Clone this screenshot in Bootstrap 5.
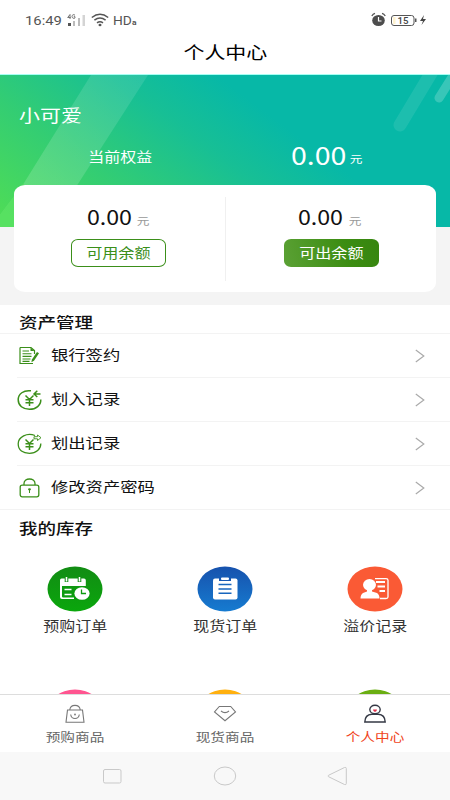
<!DOCTYPE html>
<html lang="zh-CN">
<head>
<meta charset="utf-8">
<meta name="viewport" content="width=device-width, initial-scale=1">
<title>个人中心</title>
<link href="https://cdn.jsdelivr.net/npm/bootstrap@5.3.0/dist/css/bootstrap.min.css" rel="stylesheet">
<style>
body{font-family:"Noto Sans CJK SC",sans-serif;line-height:1;color:#111;background:#fff}
svg{display:block;flex:none}
.screen{width:450px;height:800px}
/* wide lettering */
.sx{display:inline-block;transform:scaleX(1.22);white-space:nowrap}
.sl{transform-origin:left center}
.status{height:38px;padding:2px 23px 0 25px;color:#555;font-family:Roboto,sans-serif}
.clock{font-size:13px;width:36px;margin-right:6px}
.clock .sx{transform:scaleX(1.14)}
.hd{font-size:13px;margin-left:4px}
.hd .sx{transform:scaleX(1.06)}
.hd b{font-size:8px}
.title{height:37px;font-size:17.2px;padding-bottom:9px;color:#000;border-bottom:1px solid #a5fff3}
.balance{height:230px;background:#f4f4f4}
.hero-art{position:absolute;left:0;top:0}
.user{padding:31px 0 0 19px;height:70px;font-size:17.2px;color:#fff}
.equity{height:40px;padding-bottom:20px;color:#fff}
.equity .cap{font-size:13.1px;margin-left:15px}
.equity .amount{padding-right:19px}
.big{font-size:24.4px;transform:scaleX(1.17)}
.mid{font-size:20px;transform:scaleX(1.16)}
.yuan{font-size:10.4px}
.amount .yuan{margin:0 0 3px 9px}
.half .yuan{color:#999;margin:0 0 1px 10px}
.wallet{margin:0 14px;height:107px;border-radius:11px/9px}
.half{height:107px;padding-top:22px}
.divide{width:1px;height:84px;background:#f0f0f0}
.pill{width:95px;height:28px;border-radius:7px/6px;font-size:13.2px;border:1px solid #3b8f1a;color:#3b8f1a;margin:auto 1px 25px 0;padding-bottom:1px}
.pill.solid{border:0;color:#fff;background:linear-gradient(75deg,#5ba135,#3c8d12 65%,#36850f);margin:auto 0 25px 1px}
.sec{font-size:15.2px;font-weight:500;color:#111;padding-left:19px}
.sec-top{height:29px;border-bottom:1px solid #f3f3f3;padding-top:5px}
.entry{height:44px;margin-left:17px;border-bottom:1px solid #f3f3f3;font-size:14.2px;padding:0 25px 0 0}
.entry .sx{margin-top:-2px}
.entry svg.ic{margin-right:9px}
.last-entry{margin-left:0;padding-left:17px}
.stock{height:184px}
.tile{font-size:13.1px;color:#333;height:123px}
.tile .sx{margin-top:7px}
.grid-area{height:145px;padding-top:17px}
.tabs{height:58px;border-top:1px solid #ddd;font-size:12px;color:#666}
.tabs .sx{margin-top:6px}
.tabs .active{color:#f0441c}
.keys{height:48px;background:#f8f8f8}
</style>
<script src="https://cdn.jsdelivr.net/npm/bootstrap@5.3.0/dist/js/bootstrap.bundle.min.js"></script>
</head>
<body>
<div class="screen d-flex flex-column overflow-hidden mx-auto">
  <header class="status d-flex align-items-center">
    <span class="clock"><span class="sx sl">16:49</span></span>
    <svg width="20" height="14" viewBox="0 0 20 14"><g fill="#bbb"><path d="M6 8h2v5H6zM11 5h2v8h-2z"/><path fill="#d4d4d4" d="M15.500 2h2.500v11h-2.500z"/></g><path fill="#555" d="M1 10h3v3H1z"/><path fill="none" stroke="#666" stroke-width=".9" d="M3 6V1.500L.7 4.500h3M8 2.200C6.500.9 5 2 5 3.500s2 2.600 3 1.400V3.700H6.800"/></svg>
    <svg class="ms-1" width="18" height="14" viewBox="0 0 18 14"><g fill="none" stroke="#555" stroke-width="1.500"><path d="M.8 4.500Q9-1.800 17.200 4.500M3.400 7.200q5.600-4.300 11.200 0M6 9.900q3-2.200 6 0"/></g><ellipse cx="9" cy="12" rx="1.500" ry="1.200" fill="#555"/></svg>
    <span class="hd"><span class="sx sl">HD<b>a</b></span></span>
    <svg class="ms-auto" width="56" height="16" viewBox="0 0 56 16"><ellipse cx="7.500" cy="8.500" rx="6.300" ry="5.500" fill="#4d4d4d"/><path d="M.8 4Q2 2 4 1.400M11 1.400Q13 2 14.300 4" fill="none" stroke="#555" stroke-width="1.300"/><path d="M7.500 5v4h3" fill="none" stroke="#fff" stroke-width="1.200"/><rect x="20.500" y="3.500" width="22.500" height="10" rx="2.500" fill="#fff" stroke="#555"/><path d="M22 5h2.500v7H22z" fill="#fff3cf"/><path d="M44 6.500h1.500v3.500H44z" fill="#555"/><text x="26.500" y="11.600" font-family="Roboto,sans-serif" font-size="8.500" font-weight="500" textLength="11" lengthAdjust="spacingAndGlyphs" fill="#444">15</text><path d="m53 3-4 6h3l-1.500 4 4.500-6h-3z" fill="#444"/></svg>
  </header>
  <div class="title d-flex align-items-center justify-content-center"><span class="sx">个人中心</span></div>

  <section class="balance position-relative">
    <svg class="hero-art" width="450" height="152" viewBox="0 0 450 152">
      <defs><linearGradient id="sky" gradientUnits="userSpaceOnUse" x1="0" y1="150" x2="150" y2="-50"><stop offset="0" stop-color="#50dd55"/><stop offset=".4" stop-color="#33cd73"/><stop offset=".75" stop-color="#17bf95"/><stop offset="1" stop-color="#07b8a7"/></linearGradient>
      <linearGradient id="glow" x1="0" y1="1" x2="1" y2="0"><stop offset="0" stop-color="#fff" stop-opacity=".18"/><stop offset="1" stop-color="#fff" stop-opacity=".1"/></linearGradient></defs>
      <path fill="url(#sky)" d="M0 0h450v152H0z"/>
      <path fill="url(#glow)" d="M91 0h57L76 112 50 152H0v-12l24-32z"/>
      <path fill="#50e05b" fill-opacity=".75" d="M0 140 24 108v44H0z"/>
      <g stroke="#fff" stroke-linecap="round"><path stroke-opacity=".09" stroke-width="13" d="M400 50 433-5"/><path stroke-opacity=".2" stroke-width="9" d="m439 23 20-32"/></g>
    </svg>
    <div class="position-relative">
      <div class="user"><span class="sx sl">小可爱</span></div>
      <div class="equity d-flex align-items-center">
        <div class="col-6 text-center"><span class="sx cap">当前权益</span></div>
        <div class="amount col-6 d-flex align-items-end justify-content-center"><span class="sx big">0.00</span><span class="sx yuan">元</span></div>
      </div>
      <div class="wallet bg-white d-flex align-items-center">
        <div class="half flex-fill d-flex flex-column align-items-center">
          <div class="d-flex align-items-end"><span class="sx mid">0.00</span><span class="sx yuan">元</span></div>
          <div class="pill d-flex align-items-center justify-content-center"><span class="sx">可用余额</span></div>
        </div>
        <div class="divide"></div>
        <div class="half flex-fill d-flex flex-column align-items-center">
          <div class="d-flex align-items-end"><span class="sx mid">0.00</span><span class="sx yuan">元</span></div>
          <div class="pill solid d-flex align-items-center justify-content-center"><span class="sx">可出余额</span></div>
        </div>
      </div>
    </div>
  </section>

  <section>
    <div class="sec sec-top d-flex align-items-center"><span class="sx sl">资产管理</span></div>
    <div class="entry d-flex align-items-center">
      <svg class="ic" width="25" height="22" viewBox="0 0 25 22"><path d="M3 2.500h11l3.500 3v3.500M16 18.500H3v-16" fill="none" stroke="#3b8f1a" stroke-width="1.200"/><path d="M13.500 2.500v3.500h4z" fill="#3b8f1a"/><path d="M5.500 6H12M5.500 8.700h9M5.500 11.400h9M5.500 14h8M5.500 16.400h7" stroke="#3b8f1a" stroke-width="1.100"/><path d="m20 7 2 1.300-5 7.500-2.600 1.400.5-2.600z" fill="#3b8f1a"/></svg>
      <span class="sx sl">银行签约</span>
      <svg class="ms-auto" width="10" height="14" viewBox="0 0 10 14"><path d="m.8 1 8 6-8 6" fill="none" stroke="#aaa" stroke-width="1.200"/></svg>
    </div>
    <div class="entry d-flex align-items-center">
      <svg class="ic" width="25" height="22" viewBox="0 0 25 22"><path d="M14 1.800C6.500.8 1.200 5 1.200 10.800S6 20.300 12.500 20.300 24 16.300 23.800 10.500" fill="none" stroke="#3b8f1a" stroke-width="1.500"/><path d="m8.500 6.500 4 4 4-4M8.500 10.800h8M8.500 13.700h8M12.500 10.500v6.500M23.500 5H17m3.300-3.200L17 5l3.300 3" fill="none" stroke="#3b8f1a" stroke-width="1.500"/></svg>
      <span class="sx sl">划入记录</span>
      <svg class="ms-auto" width="10" height="14" viewBox="0 0 10 14"><path d="m.8 1 8 6-8 6" fill="none" stroke="#aaa" stroke-width="1.200"/></svg>
    </div>
    <div class="entry d-flex align-items-center">
      <svg class="ic" width="25" height="22" viewBox="0 0 25 22"><path d="M18 2.500C10-.8 1.200 4 1.200 10.800S6 20.300 12.500 20.300 24 16.300 23.800 10.500" fill="none" stroke="#3b8f1a" stroke-width="1.300"/><path d="m8.500 6.500 4 4 4-4M8.500 10.800h8M8.500 13.700h8M12.500 10.500v6.500" fill="none" stroke="#3b8f1a" stroke-width="1.500"/><path d="M17 3.700h3.500V2L24 4.700l-3.500 2.800V5.800H17z" fill="#fff" stroke="#3b8f1a" stroke-width=".9"/></svg>
      <span class="sx sl">划出记录</span>
      <svg class="ms-auto" width="10" height="14" viewBox="0 0 10 14"><path d="m.8 1 8 6-8 6" fill="none" stroke="#aaa" stroke-width="1.200"/></svg>
    </div>
    <div class="entry last-entry d-flex align-items-center">
      <svg class="ic" width="25" height="22" viewBox="0 0 25 22"><rect x="3.200" y="8.200" width="18.600" height="11.600" rx="2" fill="none" stroke="#3b8f1a" stroke-width="1.300"/><path d="M7 8V6.500C7 .5 18 .5 18 6.500V8" fill="none" stroke="#3b8f1a" stroke-width="1.300"/><path d="M11 12.500a1.500 1.300 0 1 1 3 0l-1 1V16h-1v-2.500z" fill="#3b8f1a"/></svg>
      <span class="sx sl">修改资产密码</span>
      <svg class="ms-auto" width="10" height="14" viewBox="0 0 10 14"><path d="m.8 1 8 6-8 6" fill="none" stroke="#aaa" stroke-width="1.200"/></svg>
    </div>
  </section>

  <section class="stock overflow-hidden">
    <div class="sec d-flex align-items-center pb-1" style="height:39px"><span class="sx sl">我的库存</span></div>
    <div class="grid-area row g-0 align-content-start">
      <div class="tile col-4 d-flex flex-column align-items-center">
        <svg width="56" height="46" viewBox="0 0 56 46"><defs><linearGradient id="g1" x1="0" y1="0" x2="0" y2="1"><stop stop-color="#128c14"/><stop offset="1" stop-color="#0aa70c"/></linearGradient></defs><ellipse cx="28" cy="23" rx="27.500" ry="22.500" fill="url(#g1)"/><path d="M14.500 12.500h22.500q1.800 0 1.800 1.800V20H13v-5.700q0-1.800 1.500-1.800M13 19.500h2v11q0 1 1.200 1H27V33H15q-2 0-2-2z" fill="#fff"/><path d="M19.500 11v5M32.500 11v5" stroke="#128c14" stroke-width="3.600"/><path d="M19.500 11v4.500M32.500 11v4.500" stroke="#fff" stroke-width="1.600"/><path d="M17.500 23.500h7M17.500 28.500h7" stroke="#fff" stroke-width="1.600"/><ellipse cx="35" cy="27.500" rx="8.800" ry="7.300" fill="#0e9b10"/><ellipse cx="35" cy="27.500" rx="7.600" ry="6.300" fill="#fff"/><path d="M34.500 23.500v4h4.500" fill="none" stroke="#0e9b10" stroke-width="1.300"/></svg>
        <span class="sx">预购订单</span>
      </div>
      <div class="tile col-4 d-flex flex-column align-items-center">
        <svg width="56" height="46" viewBox="0 0 56 46"><defs><linearGradient id="g2" x1="0" y1="0" x2="0" y2="1"><stop stop-color="#1752ad"/><stop offset="1" stop-color="#167bd0"/></linearGradient></defs><ellipse cx="28" cy="23" rx="27.500" ry="22.500" fill="url(#g2)"/><rect x="16" y="12.500" width="24.500" height="21" rx="2" fill="#fff"/><path d="M22 11h12v4H22z" fill="#1758b2"/><rect x="24" y="11.500" width="8" height="2.500" rx="1" fill="#fff"/><path d="M21.500 18.500h13M21.500 23h13M21.500 27.300h13" stroke="#1766be" stroke-width="1.500"/></svg>
        <span class="sx">现货订单</span>
      </div>
      <div class="tile col-4 d-flex flex-column align-items-center">
        <svg width="56" height="46" viewBox="0 0 56 46"><ellipse cx="28" cy="23" rx="27.500" ry="22.500" fill="#fa5a35"/><ellipse cx="22.500" cy="18.800" rx="6.500" ry="5.800" fill="#fff"/><path d="M20 23h5v2.500l5 1.500q2.500 1.500 2.500 5.500h-19q0-4 2.500-5.500l4-1.500z" fill="#fff"/><path d="M28 12.700h11q2 0 2 1.500V31q0 1.500-2 1.500h-6" fill="none" stroke="#fff" stroke-width="1.300"/><path d="M29 16h9M30.500 20.500H38M32.500 25H38" stroke="#fff" stroke-width="1.900"/></svg>
        <span class="sx">溢价记录</span>
      </div>
      <div class="col-4 d-flex justify-content-center"><svg width="56" height="46" viewBox="0 0 56 46"><ellipse cx="28" cy="23" rx="27.500" ry="22.500" fill="#ff5590"/></svg></div>
      <div class="col-4 d-flex justify-content-center"><svg width="56" height="46" viewBox="0 0 56 46"><ellipse cx="28" cy="23" rx="27.500" ry="22.500" fill="#ffb00f"/></svg></div>
      <div class="col-4 d-flex justify-content-center"><svg width="56" height="46" viewBox="0 0 56 46"><ellipse cx="28" cy="23" rx="27.500" ry="22.500" fill="#6aae12"/></svg></div>
    </div>
  </section>

  <nav class="tabs bg-white row g-0">
    <div class="col-4 d-flex flex-column align-items-center pt-2">
      <svg width="24" height="22" viewBox="0 0 24 22"><g fill="none" stroke="#777" stroke-width="1.100"><path d="M4.500 7h15l1.500 12.200H3zM6.700 7C7.500.8 16.500.8 17.300 7"/><path d="M7.700 11.500q.5 4 4.300 4t4.300-4"/></g><circle cx="12" cy="11.500" r=".9" fill="#777"/></svg>
      <span class="sx">预购商品</span>
    </div>
    <div class="col-4 d-flex flex-column align-items-center pt-2">
      <svg width="24" height="22" viewBox="0 0 24 22"><g fill="none" stroke="#777" stroke-width="1.100"><path d="M6.300 3.500h11.400L22.500 9 12 17.700 1.500 9z"/><path d="M8 8q4 3.300 8 0"/></g></svg>
      <span class="sx">现货商品</span>
    </div>
    <div class="active col-4 d-flex flex-column align-items-center pt-2">
      <svg width="24" height="22" viewBox="0 0 24 22"><g fill="none" stroke="#343844" stroke-width="1.400"><ellipse cx="12" cy="6.500" rx="5.200" ry="4.300"/><path d="M1.800 19q.2-7.500 7-7.800h6.400q6.800.3 7 7.800z"/></g><path d="M10 6.500h4q0 1.600-2 2.500-2-.9-2-2.500" fill="#e0304b"/></svg>
      <span class="sx">个人中心</span>
    </div>
  </nav>
  <footer class="keys d-flex align-items-center justify-content-center">
    <svg width="246" height="22" viewBox="0 0 246 22"><g fill="none" stroke="#c9c9c9" stroke-width="1"><rect x="1.500" y="4.500" width="17.500" height="13.500" rx="1.500"/><ellipse cx="123" cy="11" rx="10.700" ry="9"/><path d="m226.500 10.300 16-7.800q1.800-.6 1.800 1v15q0 1.600-1.800 1l-16-7.800q-1.200-.7 0-1.400z"/></g></svg>
  </footer>
</div>
</body>
</html>
